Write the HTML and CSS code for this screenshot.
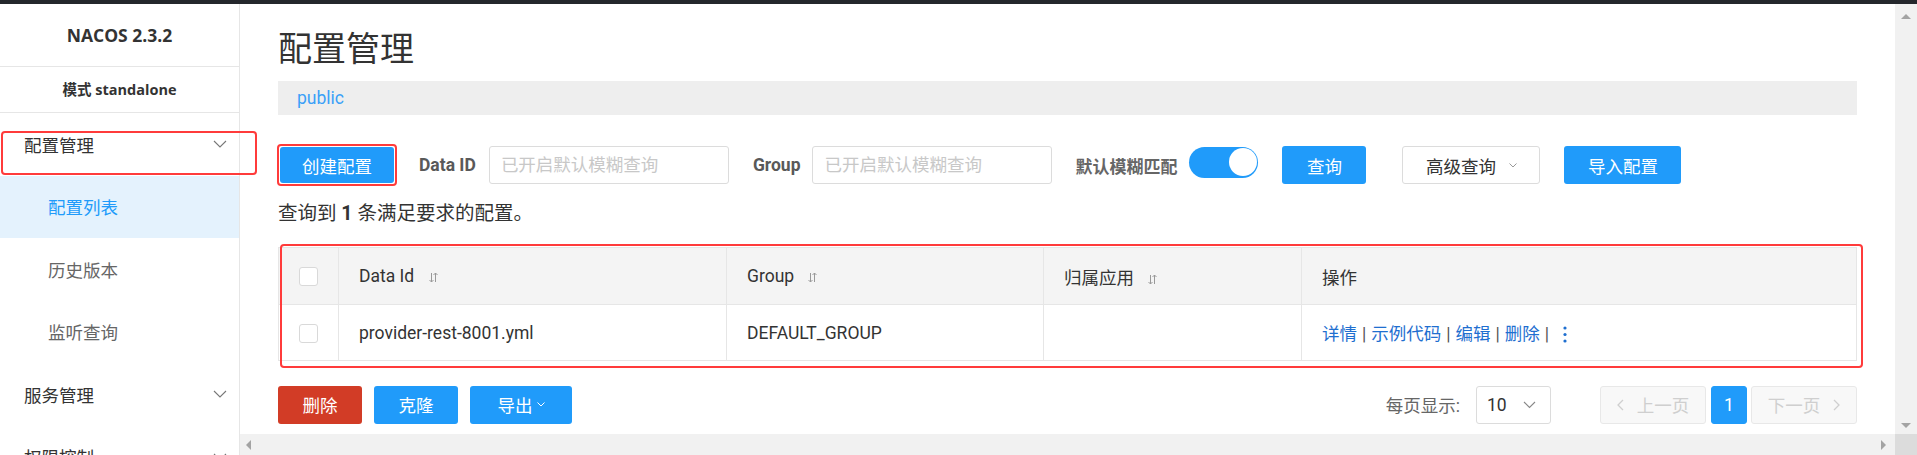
FILE: index.html
```html
<!DOCTYPE html>
<html lang="zh-CN">
<head>
    <meta charset="UTF-8">
    <meta name="viewport" content="width=device-width, initial-scale=1.0">
    <title>配置管理 - Nacos</title>
    <link rel="stylesheet" href="styles.css">
</head>
<body>
    <div class="window-edge"></div>
    <div class="app">
        <!-- Sidebar -->
        <aside class="sidebar">
            <div class="brand">NACOS 2.3.2</div>
            <div class="mode">模式 standalone</div>
            <ul class="menu">
                <li class="menu-group marked marked-menu">
                    <span>配置管理</span>
                    <svg class="chevron" width="14" height="8" viewBox="0 0 14 8"><path d="M1 1l6 6 6-6"/></svg>
                </li>
                <li class="menu-item active">配置列表</li>
                <li class="menu-item">历史版本</li>
                <li class="menu-item">监听查询</li>
                <li class="menu-group">
                    <span>服务管理</span>
                    <svg class="chevron" width="14" height="8" viewBox="0 0 14 8"><path d="M1 1l6 6 6-6"/></svg>
                </li>
                <li class="menu-group">
                    <span>权限控制</span>
                    <svg class="chevron" width="14" height="8" viewBox="0 0 14 8"><path d="M1 1l6 6 6-6"/></svg>
                </li>
            </ul>
        </aside>

        <div class="main">
            <div class="main-view">
                <div class="content">
                    <h1 class="page-title">配置管理</h1>
                    <div class="namespace-bar"><span class="namespace">public</span></div>

                    <!-- Search toolbar -->
                    <form class="toolbar">
                        <button type="button" class="btn btn-primary btn-create marked marked-create">创建配置</button>
                        <label class="field-label label-dataid">Data ID</label>
                        <input class="field-input" type="text" placeholder="已开启默认模糊查询">
                        <label class="field-label label-group">Group</label>
                        <input class="field-input" type="text" placeholder="已开启默认模糊查询">
                        <span class="field-label label-fuzzy">默认模糊匹配</span>
                        <span class="switch"><span class="switch-knob"></span></span>
                        <button type="button" class="btn btn-primary btn-search">查询</button>
                        <button type="button" class="btn btn-normal btn-advanced">高级查询
                            <svg class="caret" width="8" height="5" viewBox="0 0 8 5"><path d="M0.5 0.5l3.5 3.5 3.5-3.5"/></svg>
                        </button>
                        <button type="button" class="btn btn-primary btn-import">导入配置</button>
                    </form>

                    <p class="result-count">查询到 <strong>1</strong> 条满足要求的配置。</p>

                    <!-- Config list -->
                    <div class="table-wrap marked marked-table">
                        <table class="config-table">
                            <colgroup>
                                <col style="width: 60px">
                                <col style="width: 388px">
                                <col style="width: 317px">
                                <col style="width: 258px">
                                <col>
                            </colgroup>
                            <thead>
                                <tr>
                                    <th class="check-cell"><span class="checkbox"></span></th>
                                    <th>Data Id <svg class="sort" width="9" height="11" viewBox="0 0 9 11"><path d="M2.5 1v9M0.5 8l2 2 2-2M6.5 10V1M4.5 3l2-2 2 2"/></svg></th>
                                    <th>Group <svg class="sort" width="9" height="11" viewBox="0 0 9 11"><path d="M2.5 1v9M0.5 8l2 2 2-2M6.5 10V1M4.5 3l2-2 2 2"/></svg></th>
                                    <th>归属应用 <svg class="sort" width="9" height="11" viewBox="0 0 9 11"><path d="M2.5 1v9M0.5 8l2 2 2-2M6.5 10V1M4.5 3l2-2 2 2"/></svg></th>
                                    <th>操作</th>
                                </tr>
                            </thead>
                            <tbody>
                                <tr>
                                    <td class="check-cell"><span class="checkbox"></span></td>
                                    <td>provider-rest-8001.yml</td>
                                    <td>DEFAULT_GROUP</td>
                                    <td></td>
                                    <td class="ops">
                                        <a>详情</a><span class="sep">|</span><a>示例代码</a><span class="sep">|</span><a>编辑</a><span class="sep">|</span><a>删除</a><span class="sep">|</span>
                                        <svg class="more" width="4" height="17" viewBox="0 0 4 17"><circle cx="2" cy="2" r="1.6"/><circle cx="2" cy="8.5" r="1.6"/><circle cx="2" cy="15" r="1.6"/></svg>
                                    </td>
                                </tr>
                            </tbody>
                        </table>
                    </div>

                    <div class="table-footer">
                        <div class="batch-actions">
                            <button type="button" class="btn btn-danger">删除</button>
                            <button type="button" class="btn btn-primary">克隆</button>
                            <button type="button" class="btn btn-primary btn-export">导出
                                <svg class="caret caret-white" width="8" height="5" viewBox="0 0 8 5"><path d="M0.5 0.5l3.5 3.5 3.5-3.5"/></svg>
                            </button>
                        </div>
                        <div class="pagination">
                            <span class="page-size-label">每页显示:</span>
                            <div class="page-size-select">
                                <span>10</span>
                                <svg width="13" height="8" viewBox="0 0 13 8"><path d="M1 1l5.5 5.5 5.5-5.5"/></svg>
                            </div>
                            <button type="button" class="page-btn page-prev" disabled>
                                <svg width="7" height="12" viewBox="0 0 7 12"><path d="M6 1L1 6l5 5"/></svg>
                                上一页
                            </button>
                            <button type="button" class="page-btn current">1</button>
                            <button type="button" class="page-btn page-next" disabled>
                                下一页
                                <svg width="7" height="12" viewBox="0 0 7 12"><path d="M1 1l5 5-5 5"/></svg>
                            </button>
                        </div>
                    </div>
                </div>

                <div class="vscroll">
                    <span class="arrow arrow-up"></span>
                    <span class="arrow arrow-down"></span>
                </div>
            </div>
            <div class="hscroll">
                <div class="hscroll-track">
                    <span class="arrow arrow-left"></span>
                    <span class="arrow arrow-right"></span>
                </div>
                <div class="scroll-corner"></div>
            </div>
        </div>
    </div>
</body>
</html>
```

FILE: styles.css
```css
body {
    margin: 0;
    width: 1917px;
    height: 455px;
    overflow: hidden;
    font-family: Roboto, "Noto Sans CJK SC", sans-serif;
    font-size: 17.5px;
    color: #333;
    background-color: #fff;
}

.window-edge {
    height: 4px;
    background-color: #24272c;
}

.app {
    display: flex;
    height: 451px;
}

/* Sidebar */
.sidebar {
    width: 239px;
    flex-shrink: 0;
    border-right: 1px solid #e6e6e6;
    background: #fff;
}

.brand {
    height: 62px;
    line-height: 62px;
    text-align: center;
    font-family: "Open Sans", sans-serif;
    font-weight: 700;
    font-size: 17.5px;
    color: #333;
    border-bottom: 1px solid #e6e6e6;
}

.mode {
    height: 45px;
    line-height: 45px;
    text-align: center;
    font-family: "Open Sans", "Noto Sans CJK SC", sans-serif;
    font-weight: 700;
    font-size: 14.5px;
    color: #333;
    border-bottom: 1px solid #e6e6e6;
}

.menu {
    list-style: none;
    margin: 0;
    padding: 0;
}

.menu li {
    height: 62.5px;
    display: flex;
    align-items: center;
    font-size: 17.5px;
}

.menu-group {
    justify-content: space-between;
    padding: 0 12px 0 24px;
    color: #333;
}

.menu-item {
    padding-left: 48px;
    color: #666;
}

.menu-item.active {
    background-color: #e4f2fd;
    color: #209bfa;
}

.chevron {
    fill: none;
    stroke: #777;
    stroke-width: 1.1;
}

/* red annotation frames */
.marked {
    position: relative;
}

.marked::after {
    content: '';
    position: absolute;
    border: 2.5px solid #ff3b3b;
    border-radius: 4px;
    pointer-events: none;
    z-index: 5;
}

.marked-menu::after {
    top: 18px;
    left: 1px;
    right: -18px;
    bottom: 1px;
}

.marked-create::after {
    top: -3px;
    left: -3px;
    right: -3px;
    bottom: -3px;
}

.marked-table::after {
    top: -3px;
    left: 2px;
    right: -6px;
    bottom: -7px;
}

/* Main area */
.main {
    flex: 1;
    display: flex;
    flex-direction: column;
    min-width: 0;
}

.main-view {
    display: flex;
    height: 436px;
}

.content {
    flex: 1;
    padding: 0 38px;
    overflow: hidden;
}

.page-title {
    margin: 25px 0 0;
    font-size: 34px;
    line-height: 40px;
    font-weight: 400;
    color: #333;
}

.namespace-bar {
    margin-top: 12px;
    height: 34px;
    line-height: 34px;
    padding-left: 19px;
    background-color: #eee;
}

.namespace {
    color: #3aa0f8;
    font-size: 17.5px;
}

.toolbar {
    margin-top: 31px;
    height: 38px;
    display: flex;
    align-items: center;
}

.btn {
    height: 37.5px;
    border: none;
    border-radius: 3px;
    padding: 0;
    font-family: inherit;
    font-size: 17.5px;
    cursor: pointer;
    display: inline-flex;
    align-items: center;
    justify-content: center;
    flex-shrink: 0;
}

.btn-primary {
    background-color: #209bfa;
    color: #fff;
}

.btn-danger {
    background-color: #d23c26;
    color: #fff;
}

.btn-normal {
    background-color: #fff;
    color: #333;
    border: 1px solid #dcdcdc;
}

.btn-create {
    width: 114px;
    height: 36px;
    margin-left: 2px;
}

.field-label {
    font-weight: 700;
    color: #595959;
    font-size: 17.5px;
    flex-shrink: 0;
}

.label-dataid {
    margin: 0 13px 0 25px;
}

.label-group {
    margin: 0 12px 0 24px;
}

.label-fuzzy {
    margin: 0 12px 0 23px;
    font-size: 17px;
    color: #666;
}

.field-input {
    width: 240px;
    height: 38px;
    box-sizing: border-box;
    border: 1px solid #dcdcdc;
    border-radius: 3px;
    padding: 0 11px;
    font-family: inherit;
    font-size: 17.5px;
    color: #333;
    flex-shrink: 0;
}

.field-input::placeholder {
    color: #c8c8c8;
}

.switch {
    width: 69px;
    height: 31px;
    border-radius: 16px;
    background-color: #209bfa;
    display: flex;
    align-items: center;
    justify-content: flex-end;
    padding-right: 1.5px;
    box-sizing: border-box;
    margin-top: -6px;
    flex-shrink: 0;
}

.switch-knob {
    width: 28px;
    height: 28px;
    border-radius: 50%;
    background: #fff;
}

.btn-search {
    width: 84px;
    margin-left: 24px;
}

.btn-advanced {
    width: 138px;
    height: 38px;
    margin-left: 36px;
    box-sizing: border-box;
}

.btn-import {
    width: 117px;
    margin-left: 24px;
}

.caret {
    fill: none;
    stroke: #999;
    stroke-width: 1;
    margin-left: 13px;
}

.caret-white {
    stroke: #fff;
    margin-left: 4px;
}

.result-count {
    margin: 16px 0 0;
    font-size: 19.5px;
    line-height: 28px;
}

/* Table */
.table-wrap {
    margin-top: 19px;
}

.config-table {
    width: 100%;
    table-layout: fixed;
    border-collapse: collapse;
    border: 1px solid #e6e6e6;
}

.config-table th,
.config-table td {
    border: 1px solid #e6e6e6;
    padding: 0 20px;
    text-align: left;
    font-weight: 400;
    color: #333;
    white-space: nowrap;
}

.config-table th {
    height: 56px;
    background-color: #f4f4f4;
}

.config-table td {
    height: 55px;
    background-color: #fff;
}

.config-table .check-cell {
    padding: 0;
    text-align: center;
}

.checkbox {
    display: inline-block;
    width: 19px;
    height: 19px;
    box-sizing: border-box;
    border: 1px solid #d9d9d9;
    border-radius: 3px;
    background: #fff;
    vertical-align: middle;
}

.sort {
    fill: none;
    stroke: #999;
    stroke-width: 1;
    margin-left: 10px;
    vertical-align: -1px;
}

.ops a {
    color: #1f6fd0;
}

.ops .sep {
    color: #555;
    margin: 0 5px;
}

.more {
    fill: #1f6fd0;
    margin-left: 5px;
    vertical-align: -3px;
}

/* Footer: batch buttons + pagination */
.table-footer {
    margin-top: 25px;
    display: flex;
    justify-content: space-between;
    align-items: center;
}

.batch-actions {
    display: flex;
    gap: 12px;
}

.batch-actions .btn {
    width: 84px;
}

.batch-actions .btn-export {
    width: 102px;
}

.pagination {
    display: flex;
    align-items: center;
}

.page-size-label {
    color: #666;
    margin-right: 16px;
}

.page-size-select {
    width: 75px;
    height: 37.5px;
    box-sizing: border-box;
    border: 1px solid #dcdcdc;
    border-radius: 3px;
    display: flex;
    align-items: center;
    justify-content: space-between;
    padding: 0 14px 0 10px;
    color: #333;
}

.page-size-select svg {
    fill: none;
    stroke: #888;
    stroke-width: 1.1;
}

.page-btn {
    height: 37.5px;
    box-sizing: border-box;
    border: 1px solid #e8e8e8;
    border-radius: 3px;
    background: #f8f8f8;
    color: #cfcfcf;
    font-family: inherit;
    font-size: 17.5px;
    display: inline-flex;
    align-items: center;
    justify-content: center;
    gap: 13px;
    padding: 0;
}

.page-btn svg {
    fill: none;
    stroke: #cfcfcf;
    stroke-width: 1.3;
}

.page-prev {
    width: 106px;
    margin-left: 49px;
}

.page-next {
    width: 106px;
    margin-left: 4px;
}

.page-btn.current {
    width: 36px;
    margin-left: 5px;
    background: #209bfa;
    border-color: #209bfa;
    color: #fff;
}

/* Scrollbars */
.vscroll {
    width: 22px;
    flex-shrink: 0;
    background: #f1f1f1;
    display: flex;
    flex-direction: column;
    justify-content: space-between;
    align-items: center;
    padding: 10px 0 6px;
    box-sizing: border-box;
}

.hscroll {
    height: 21px;
    display: flex;
}

.hscroll-track {
    flex: 1;
    background: #f1f1f1;
    display: flex;
    justify-content: space-between;
    align-items: center;
    padding: 0 9px 0 6px;
}

.scroll-corner {
    width: 22px;
    background: #dcdcdc;
}

.arrow {
    width: 0;
    height: 0;
    border-style: solid;
    border-color: transparent;
}

.arrow-up {
    border-width: 0 5.5px 5px;
    border-bottom-color: #a3a3a3;
}

.arrow-down {
    border-width: 5px 5.5px 0;
    border-top-color: #a3a3a3;
}

.arrow-left {
    border-width: 5.5px 5px 5.5px 0;
    border-right-color: #a3a3a3;
}

.arrow-right {
    border-width: 5.5px 0 5.5px 5px;
    border-left-color: #a3a3a3;
}
```
